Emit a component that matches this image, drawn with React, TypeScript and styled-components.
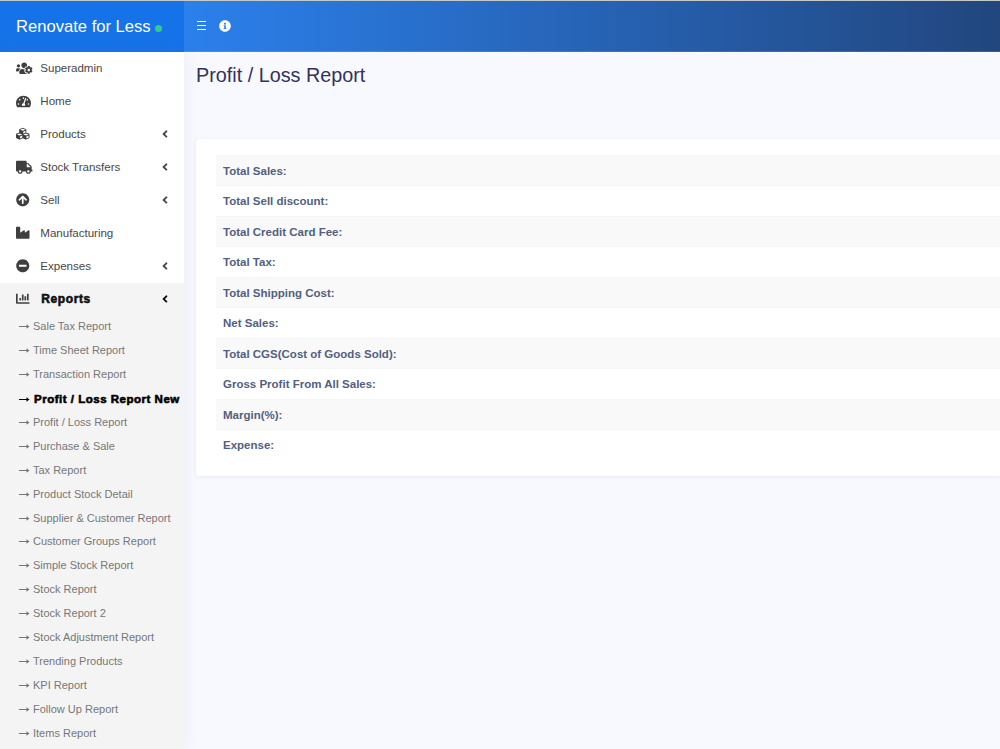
import React from "react";
import styled, { createGlobalStyle } from "styled-components";
import {
  FaUsersCog, FaTachometerAlt, FaCubes, FaTruck, FaArrowCircleUp, FaIndustry,
  FaMinusCircle, FaChartBar, FaAngleLeft, FaInfoCircle,
} from "react-icons/fa";
import type { IconType } from "react-icons";

const GlobalStyle = createGlobalStyle`
  * { box-sizing: border-box; }
  body { margin: 0; overflow: hidden; background: #f8f9fe; font-family: "Liberation Sans", Arial, sans-serif; }
`;

const Page = styled.div`
  display: flex;
  flex-direction: column;
  width: 1000px;
  height: 749px;
  overflow: hidden;
  border-top: 1px solid #c3c9c8;
`;

const Header = styled.header`
  display: flex;
  flex: none;
  height: 51px;
`;

const Brand = styled.div`
  display: flex;
  align-items: center;
  width: 184px;
  padding-left: 16px;
  background: #1572e8;
  color: #fff;
  font-size: 16.6px;
  white-space: nowrap;
`;

const StatusDot = styled.span`
  width: 7px;
  height: 7px;
  margin: 3px 0 0 4px;
  border-radius: 50%;
  background: #2dce89;
`;

const Navbar = styled.nav`
  display: flex;
  flex: 1;
  align-items: center;
  gap: 13px;
  padding-left: 13px;
  background: linear-gradient(to right, #2b80ec, #22467e);
  border-bottom: 1px solid rgba(255, 255, 255, 0.12);
  color: #fff;
`;

const MenuToggle = styled.svg`
  margin-bottom: 2px;
`;

const Body = styled.div`
  display: flex;
  flex: 1;
  min-height: 0;
`;

const Sidebar = styled.aside`
  position: relative;
  flex: none;
  width: 184px;
  background: #fff;
  box-shadow: 0 0 14px rgba(130, 130, 200, 0.12);
`;

const MenuItem = styled.div<{ $active?: boolean }>`
  display: flex;
  align-items: center;
  height: 33px;
  padding: 0 13px 1px 16px;
  background: ${(p) => (p.$active ? "#f4f4f4" : "#fff")};
  color: ${(p) => (p.$active ? "#111" : "#484848")};
`;

const IconSlot = styled.span`
  display: flex;
  flex: none;
  width: 24px;
  color: #3f3f3f;
`;

const MenuLabel = styled.span<{ $active?: boolean }>`
  flex: 1;
  padding-bottom: ${(p) => (p.$active ? 0 : 1)}px;
  padding-left: ${(p) => (p.$active ? 1.3 : 0.3)}px;
  font-size: ${(p) => (p.$active ? 12 : 11.6)}px;
  font-weight: ${(p) => (p.$active ? 700 : 400)};
  letter-spacing: ${(p) => (p.$active ? 0.6 : -0.04)}px;
  -webkit-text-stroke: ${(p) => (p.$active ? 0.6 : 0)}px currentColor;
`;

const SubMenu = styled.div`
  height: 467.5px;
  margin-top: -1.5px;
  background: #f4f4f4;
`;

const SubItem = styled.div<{ $active?: boolean }>`
  display: flex;
  align-items: center;
  height: 23.9px;
  padding-top: ${(p) => (p.$active ? 2 : 0)}px;
  padding-left: 19px;
  color: ${(p) => (p.$active ? "#000" : "#777")};
  font-size: ${(p) => (p.$active ? 11.5 : 11)}px;
  font-weight: ${(p) => (p.$active ? 700 : 400)};
  letter-spacing: ${(p) => (p.$active ? 0.51 : 0)}px;
  -webkit-text-stroke: ${(p) => (p.$active ? 0.6 : 0)}px currentColor;
  white-space: nowrap;
`;

const Arrow = styled.svg<{ $active?: boolean }>`
  flex: none;
  width: 11px;
  height: 7px;
  margin: 1px ${(p) => (p.$active ? 4 : 3)}px 0 0;
`;

const Main = styled.main`
  flex: 1;
  min-width: 0;
  padding-left: 12px;
`;

const Title = styled.h1`
  margin: 11px 0 0;
  height: 76px;
  color: #32325d;
  font-size: 19.8px;
  font-weight: 400;
  line-height: 24px;
`;

const Card = styled.section`
  height: 337px;
  padding: 16px 0 0 20px;
  border-radius: 4px 0 0 4px;
  background: #fff;
  box-shadow: 0 1px 4px rgba(100, 110, 150, 0.1);
`;

const Row = styled.div`
  display: flex;
  align-items: center;
  height: 30.5px;
  padding: 1px 0 0 7px;
  color: #525f7f;
  font-size: 11.5px;
  font-weight: 700;
  &:nth-child(odd) { background: #f9f9f9; box-shadow: inset 0 1px #f5f5f5, inset 0 -1px #f5f5f5; }
`;

type Entry = { label: string; icon: IconType; size: number; active?: boolean };

const menu: Entry[] = [
  { label: "Superadmin", icon: FaUsersCog, size: 16.5 },
  { label: "Home", icon: FaTachometerAlt, size: 15 },
  { label: "Products", icon: FaCubes, size: 13.5 },
  { label: "Stock Transfers", icon: FaTruck, size: 16.5 },
  { label: "Sell", icon: FaArrowCircleUp, size: 13.5 },
  { label: "Manufacturing", icon: FaIndustry, size: 13.5 },
  { label: "Expenses", icon: FaMinusCircle, size: 13.5 },
  { label: "Reports", icon: FaChartBar, size: 13.5, active: true },
];
const expandable = ["Products", "Stock Transfers", "Sell", "Expenses", "Reports"];

const reports = [
  "Sale Tax Report", "Time Sheet Report", "Transaction Report", "Profit / Loss Report New",
  "Profit / Loss Report", "Purchase & Sale", "Tax Report", "Product Stock Detail",
  "Supplier & Customer Report", "Customer Groups Report", "Simple Stock Report", "Stock Report",
  "Stock Report 2", "Stock Adjustment Report", "Trending Products", "KPI Report",
  "Follow Up Report", "Items Report",
];

const totals = [
  "Total Sales:", "Total Sell discount:", "Total Credit Card Fee:", "Total Tax:",
  "Total Shipping Cost:", "Net Sales:", "Total CGS(Cost of Goods Sold):",
  "Gross Profit From All Sales:", "Margin(%):", "Expense:",
];

export default function App() {
  return (
    <Page>
      <GlobalStyle />
      <Header>
        <Brand>Renovate for Less<StatusDot /></Brand>
        <Navbar>
          <MenuToggle width="9" height="9" viewBox="0 0 9 9" stroke="#fff" strokeWidth="1">
            <path d="M0 .5h9M0 4.5h9M0 8.5h9" />
          </MenuToggle>
          <FaInfoCircle size={12} />
        </Navbar>
      </Header>
      <Body>
        <Sidebar>
          {menu.map(({ label, icon: Icon, size, active }) => (
            <MenuItem key={label} $active={active}>
              <IconSlot><Icon size={size} /></IconSlot>
              <MenuLabel $active={active}>{label}</MenuLabel>
              {expandable.includes(label) && <FaAngleLeft size={12} />}
            </MenuItem>
          ))}
          <SubMenu>
            {reports.map((label) => {
              const active = label === "Profit / Loss Report New";
              return (
                <SubItem key={label} $active={active}>
                  <Arrow $active={active} viewBox="0 0 11 7" fill="none" stroke="currentColor">
                    <path d="M0 3.5h9" />
                    <path d="M7.5 1.3l3 2.2-3 2.2z" fill="currentColor" stroke="none" />
                  </Arrow>
                  {label}
                </SubItem>
              );
            })}
          </SubMenu>
        </Sidebar>
        <Main>
          <Title>Profit / Loss Report</Title>
          <Card>
            {totals.map((label) => <Row key={label}>{label}</Row>)}
          </Card>
        </Main>
      </Body>
    </Page>
  );
}
